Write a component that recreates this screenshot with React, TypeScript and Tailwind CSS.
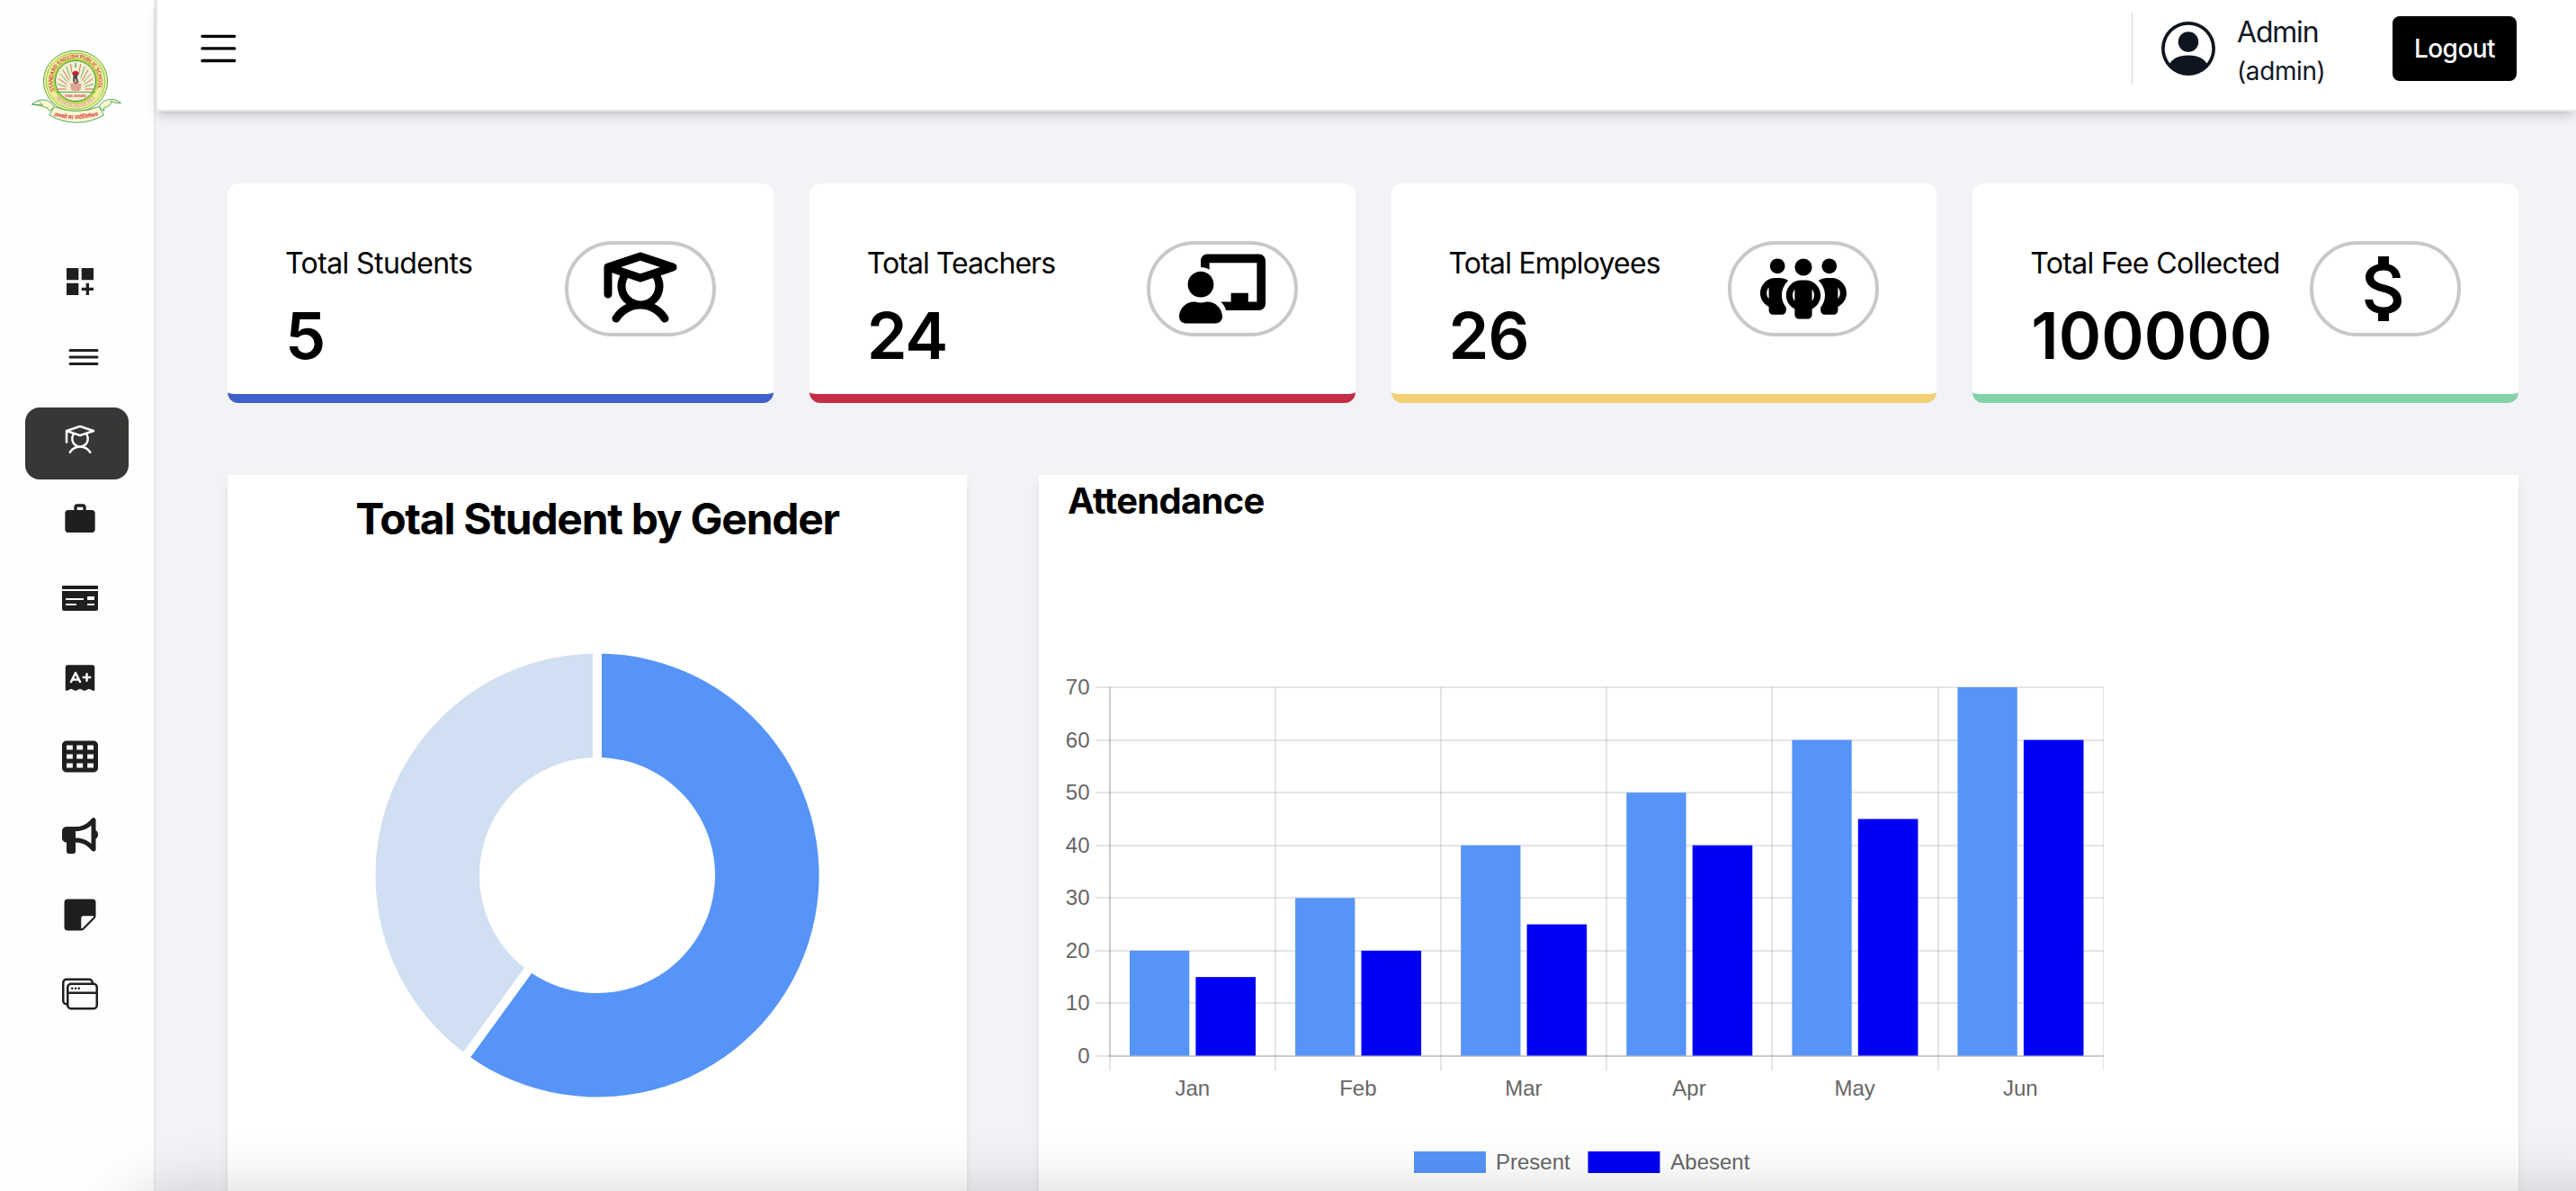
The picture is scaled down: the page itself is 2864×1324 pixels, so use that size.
import type { ReactNode } from "react";
import { BsPersonCircle, BsStickyFill, BsWindowStack } from "react-icons/bs";
import { FaChalkboardTeacher, FaMoneyCheck } from "react-icons/fa";
import { FaBullhorn, FaPeopleGroup, FaTableCells } from "react-icons/fa6";
import { IoReorderThreeOutline } from "react-icons/io5";
import { MdAttachMoney, MdDashboardCustomize, MdWork } from "react-icons/md";
import { PiExamFill, PiStudent, PiStudentBold } from "react-icons/pi";

function Logo() {
  const rays = [-90, -74, -60, -47, -35, -23, -11, 0];
  return (
    <svg viewBox="0 0 100 81" className="h-[81px] w-[100px] overflow-visible">
      <defs>
        <path id="ring-text" d="M 25.7 45 A 25.7 25.7 0 1 1 72.3 45" />
        <path id="ribbon-text" d="M 25 73 Q 49 80.5 77 72" />
      </defs>
      <ellipse cx="49" cy="34.3" rx="35.6" ry="34" fill="#fbf38f" stroke="#3c9d58" strokeWidth="0.9" />
      <ellipse cx="49" cy="34.3" rx="32.8" ry="31.2" fill="#fbf5a0" stroke="#5fb06a" strokeWidth="0.8" />
      <ellipse cx="49" cy="34.3" rx="30.8" ry="29.2" fill="#eef09a" stroke="#a9cf6a" strokeWidth="0.6" />
      <circle cx="49" cy="34" r="24" fill="none" stroke="#bcd548" strokeWidth="2.6" />
      <circle cx="49" cy="34" r="22.5" fill="#f4f0d0" stroke="#2f9148" strokeWidth="1" />
      {rays.map((a, i) =>
        [1, -1].map((s) => {
          const r = (a * Math.PI) / 180;
          const dx = Math.cos(r) * s;
          const dy = Math.sin(r);
          return (
            <line
              key={`${a}${s}`}
              x1={49 + dx * 10.5}
              y1={43 + dy * 13}
              x2={49 + dx * 20.5}
              y2={43 + dy * 29}
              stroke={i % 2 ? "#d8434b" : "#3fa257"}
              strokeWidth="0.8"
            />
          );
        })
      )}
      <ellipse cx="49" cy="32" rx="5.6" ry="13" fill="#f7f3d9" />
      <path d="M45 26 q1 -3.5 4 -3 q4 0 4 3 l-1.5 1.5 h-5z" fill="#c8202c" />
      <path d="M46.5 27 h5 l-.6 3.4 1.6 4.4 -2 2.4 h-3 l-1.4 -3z" fill="#4b4b55" />
      <path d="M48 31 l3 2 -1 3 h-2.6z" fill="#c9a26b" />
      <path d="M43 37 q3 -1.6 6 .3 q3 -1.9 6.5 -.3 l-1 7 q-5 2.6 -10.5 0z" fill="#e0a597" />
      <path d="M27.6 46.3 H70.6" stroke="#3c9d58" strokeWidth="0.9" />
      <text x="49" y="51.6" textAnchor="middle" fontSize="4.4" fontWeight="700" fill="#d13c3c" fontFamily="Liberation Sans, sans-serif" textLength="24" lengthAdjust="spacingAndGlyphs">
        CHAS, BOKARO
      </text>
      <text fontSize="5.8" fontWeight="700" fill="#d8434b" fontFamily="Liberation Sans, sans-serif">
        <textPath href="#ring-text" textLength="100" lengthAdjust="spacingAndGlyphs">STANDARD ENGLISH PUBLIC SCHOOL</textPath>
      </text>
      <path d="M28.5 51.5 A 26.8 26.8 0 0 0 69.5 51.5" fill="none" stroke="#e6b5aa" strokeWidth="4" strokeDasharray="1.6 .8 2.6 1 .8 .7" />
      <path d="M20.5 67.5 L25.5 62.5 Q22 56.5 15 55.3 Q8 53.6 0.5 60 L12.5 61 L8.5 56.8 M20.5 67.5 Q18 61.5 0.5 60" fill="#fdf8d0" stroke="#3c9d58" strokeWidth="0.9" strokeLinejoin="round" />
      <path d="M80.5 67.5 L75 62.5 Q79 56 86 54.6 Q93 53.4 99.5 58.5 Q92 59 88.5 56.5 Q90 61 80.5 64z" fill="#fdf8d0" stroke="#3c9d58" strokeWidth="0.9" strokeLinejoin="round" />
      <path d="M25.5 62.5 Q49 72.5 75 62.5 L80.5 72 Q50 88.5 19.8 72z" fill="#fdf8d0" stroke="#3c9d58" strokeWidth="0.9" strokeLinejoin="round" />
      <text fontSize="6.4" fontWeight="700" fill="#d8434b" fontFamily="Noto Sans Devanagari, Noto Sans, sans-serif">
        <textPath href="#ribbon-text" textLength="50" lengthAdjust="spacingAndGlyphs">तमसो मा ज्योतिर्गमय</textPath>
      </text>
    </svg>
  );
}

const navItems: { icon: ReactNode; active?: boolean; className?: string }[] = [
  { icon: <MdDashboardCustomize size={40} /> },
  { icon: <IoReorderThreeOutline size={48} />, className: "-mt-2" },
  { icon: <PiStudent size={40} />, active: true },
  { icon: <MdWork size={40} /> },
  { icon: <FaMoneyCheck size={40} /> },
  { icon: <PiExamFill size={40} /> },
  { icon: <FaTableCells size={40} /> },
  { icon: <FaBullhorn size={40} /> },
  { icon: <BsStickyFill size={40} /> },
  { icon: <BsWindowStack size={40} /> },
];

function Sidebar() {
  return (
    <aside className="flex w-[173px] shrink-0 flex-col border-r-2 border-[#e8e8ea] bg-[#fefefe]">
      <div className="pl-[35px] pt-14">
        <Logo />
      </div>
      <nav className="mt-[140px] flex flex-col gap-2 pl-7">
        {navItems.map((item, i) => (
          <div
            key={i}
            className={`flex h-20 w-[115px] items-start rounded-2xl pl-[41px] pt-4 ${
              item.active ? "bg-[#373835] text-white" : "text-[#1f1f1f]"
            }`}
          >
            <span className={item.className}>{item.icon}</span>
          </div>
        ))}
      </nav>
    </aside>
  );
}

function Header() {
  return (
    <header className="flex h-[124px] shrink-0 items-center border-b-2 border-l-2 border-[#e5e7eb] bg-white pb-3.5 shadow-[0_8px_12px_-2px_rgba(0,0,0,0.12),0_4px_8px_-4px_rgba(0,0,0,0.12)]">
      <button className="ml-12" aria-label="Menu">
        <svg viewBox="0 0 40 32" className="h-8 w-10" stroke="#000" strokeWidth="3.3" strokeLinecap="round">
          <path d="M1.9 2.3H37.7M1.9 15.9H37.7M1.9 29.5H37.7" />
        </svg>
      </button>
      <div className="ml-auto flex items-center pr-[66px]">
        <div className="h-20 w-px bg-[#d4d4d4]" />
        <BsPersonCircle size={60} className="ml-8 text-[#0f1520]" />
        <div className="ml-6 w-[173px] pt-0.5 text-[#111827]">
          <div className="text-[32px] leading-[48px] tracking-[-1.2px]">Admin</div>
          <div className="text-[28px] leading-[38px] tracking-[-0.4px]">(admin)</div>
        </div>
        <button className="flex h-[72px] w-[138px] items-center justify-center rounded-lg bg-black text-[28px] font-medium tracking-[-0.57px] text-white">
          Logout
        </button>
      </div>
    </header>
  );
}

const stats: { label: string; value: string; icon: ReactNode; border: string; labelTracking: string; valueClass: string }[] = [
  { label: "Total Students", value: "5", icon: <PiStudentBold size={96} />, border: "border-[#3f5fcd]", labelTracking: "tracking-[-0.6px]", valueClass: "" },
  { label: "Total Teachers", value: "24", icon: <FaChalkboardTeacher size={96} />, border: "border-[#c42d48]", labelTracking: "tracking-[-0.94px]", valueClass: "tracking-[-1.3px]" },
  { label: "Total Employees", value: "26", icon: <FaPeopleGroup size={96} />, border: "border-[#f2cf76]", labelTracking: "tracking-[-0.8px]", valueClass: "tracking-[-0.9px]" },
  { label: "Total Fee Collected", value: "100000", icon: <MdAttachMoney size={96} />, border: "border-[#82d1a7]", labelTracking: "tracking-[-0.67px]", valueClass: "ml-px" },
];

function StatCards() {
  return (
    <div className="grid grid-cols-4 gap-10">
      {stats.map((s) => (
        <div key={s.label} className={`flex h-[244px] justify-between rounded-xl border-b-[10px] bg-white px-16 pt-16 text-black ${s.border}`}>
          <div className="w-0 whitespace-nowrap pt-px">
            <div className={`text-[32px] leading-[48px] ${s.labelTracking}`}>{s.label}</div>
            <div className={`mt-4 text-[72px] font-semibold leading-[80px] ${s.valueClass}`}>{s.value}</div>
          </div>
          <div className="flex h-[106px] w-[168px] items-center justify-center rounded-full border-4 border-[#c8c8c8]">{s.icon}</div>
        </div>
      ))}
    </div>
  );
}

/** Ring slice between two angles, in degrees clockwise from twelve o'clock. */
function slice(from: number, to: number, outer = 246.6, inner = 131) {
  const at = (deg: number, r: number) => {
    const t = ((deg - 90) * Math.PI) / 180;
    return `${(250 + r * Math.cos(t)).toFixed(2)} ${(250 + r * Math.sin(t)).toFixed(2)}`;
  };
  const large = to - from > 180 ? 1 : 0;
  return `M ${at(from, outer)} A ${outer} ${outer} 0 ${large} 1 ${at(to, outer)} L ${at(to, inner)} A ${inner} ${inner} 0 ${large} 0 ${at(from, inner)} Z`;
}

function GenderPanel() {
  return (
    <section className="flex w-[822px] shrink-0 flex-col items-center bg-white pt-[17px] shadow-[0_8px_12px_-2px_rgba(0,0,0,0.1),0_4px_8px_-4px_rgba(0,0,0,0.1)]">
      <h2 className="text-[48px] font-bold leading-[64px] tracking-[-1.27px] text-black">Total Student by Gender</h2>
      <svg viewBox="0 0 500 500" className="mt-[113.5px] h-[500px] w-[500px]">
        <path d={slice(0, 216)} fill="#5694f8" />
        <path d={slice(216, 360)} fill="#d0dff1" />
        <path d="M250 119 V0 M173 356 L102.8 452.6" stroke="#fff" strokeWidth="10" strokeLinecap="square" />
      </svg>
    </section>
  );
}

const months = ["Jan", "Feb", "Mar", "Apr", "May", "Jun"];
const present = [20, 30, 40, 50, 60, 70];
const absent = [15, 20, 25, 40, 45, 60];
const ticks = [0, 10, 20, 30, 40, 50, 60, 70];

function AttendanceChart() {
  const left = 55;
  const step = 184.1;
  const base = 426;
  const right = left + step * 6;
  const y = (v: number) => base - (v * 410) / 70;
  return (
    <svg viewBox="0 0 1178 576" className="-ml-2 h-[576px] w-[1178px]" fontFamily="Liberation Sans, Arial, sans-serif" fontSize="24" fill="#666">
      {ticks.map((v) => (
        <g key={v}>
          <rect x={left - 16} y={Math.round(y(v)) - 1} width={right - left + 16} height="2" fill="#000" fillOpacity="0.1" />
          <text x="32.5" y={Math.round(y(v)) + 8.3} textAnchor="end">{v}</text>
        </g>
      ))}
      {[0, 1, 2, 3, 4, 5, 6].map((i) => (
        <rect key={i} x={Math.round(left + step * i) - 1} y="16" width={i === 6 ? 1 : 2} height={base} fill="#000" fillOpacity="0.1" />
      ))}
      {months.map((m, i) => (
        <g key={m}>
          <rect x={left + step * i + 22} y={y(present[i])} width="66.3" height={base - 0.5 - y(present[i])} fill="#5694f8" />
          <rect x={left + step * i + 95.4} y={y(absent[i])} width="66.6" height={base - 0.5 - y(absent[i])} fill="#0000f5" />
          <text x={left + step * (i + 0.5) - 0.3} y="470.3" textAnchor="middle">{m}</text>
        </g>
      ))}
      <rect x={left - 1} y="16" width="2" height={base - 15} fill="#000" fillOpacity="0.1" />
      <rect x={left - 1} y={base - 1} width={right - left + 1} height="2" fill="#000" fillOpacity="0.1" />
      <rect x="393" y="532" width="80" height="24" fill="#5694f8" />
      <text x="484" y="552.3">Present</text>
      <rect x="586.5" y="532" width="80" height="24" fill="#0000f5" />
      <text x="678.3" y="552.3">Abesent</text>
    </svg>
  );
}

function AttendancePanel() {
  return (
    <section className="flex grow flex-col bg-white pl-8 pt-px shadow-[0_8px_12px_-2px_rgba(0,0,0,0.1),0_4px_8px_-4px_rgba(0,0,0,0.1)]">
      <h2 className="mb-[163px] text-[40px] font-bold leading-[56px] tracking-[-0.7px] text-black">Attendance</h2>
      <AttendanceChart />
    </section>
  );
}

export default function App() {
  return (
    <div className="relative flex h-[1324px] w-[2864px] overflow-hidden bg-[#f2f3f7] font-['Inter',sans-serif]">
      <Sidebar />
      <div className="flex min-w-0 grow flex-col">
        <Header />
        <main className="flex min-h-0 grow flex-col gap-20 pl-20 pr-16 pt-20">
          <StatCards />
          <div className="flex min-h-0 grow gap-20">
            <GenderPanel />
            <AttendancePanel />
          </div>
        </main>
      </div>
      <div className="pointer-events-none absolute -right-20 left-[140px] top-full h-40 rounded-[48px] shadow-[0_0_64px_rgba(0,0,0,0.17)]" />
    </div>
  );
}
